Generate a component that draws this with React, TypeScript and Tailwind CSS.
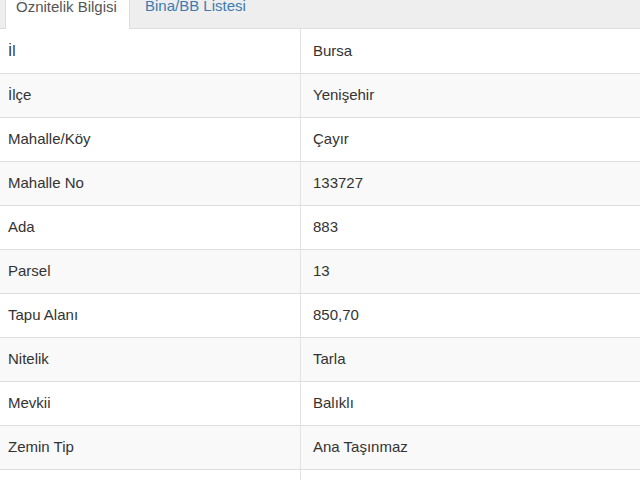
import React from 'react'

// ─── Data ────────────────────────────────────────────────────────────────────

const rows: [string, string][] = [
  ['İl', 'Bursa'],
  ['İlçe', 'Yenişehir'],
  ['Mahalle/Köy', 'Çayır'],
  ['Mahalle No', '133727'],
  ['Ada', '883'],
  ['Parsel', '13'],
  ['Tapu Alanı', '850,70'],
  ['Nitelik', 'Tarla'],
  ['Mevkii', 'Balıklı'],
  ['Zemin Tip', 'Ana Taşınmaz'],
  ['Pafta', 'H22-D-19-A-3'],
]

// ─── App ─────────────────────────────────────────────────────────────────────

export default function App() {
  return (
    <div
      className="w-[640px] h-[480px] overflow-hidden bg-white text-[#333]"
      style={{ fontFamily: '"Liberation Sans", Arial, sans-serif' }}
    >
      {/* Tabs */}
      <div className="flex h-[29px] bg-[#eeeeee] border-b border-[#dddddd] pl-[5px]">
        <div className="flex items-end w-[125px] h-[29px] -mb-px bg-white border-x border-[#dddddd] pl-[10px] pb-[12px]">
          <span className="text-[15px] leading-5 text-[#555]">Öznitelik Bilgisi</span>
        </div>
        <div className="flex items-end h-[28px] pl-[15px] pb-[12px] pr-[14px]">
          <span className="text-[15px] leading-5 text-[#3d7bb0]">Bina/BB Listesi</span>
        </div>
      </div>

      {/* Table */}
      <div className="flex flex-col">
        {rows.map(([k, v], i) => (
          <div
            key={k}
            className={
              'flex h-[44px] border-t border-[#dddddd] first:border-t-0 ' +
              (i % 2 === 1 ? 'bg-[#f9f9f9]' : 'bg-white')
            }
          >
            <div
              className={
                'w-[301px] flex items-center pl-[8px] text-[15px] border-r border-[#e3e3e3] ' +
                (i === rows.length - 1 ? 'text-[#d8d8d8] items-start pt-[8px]' : '')
              }
            >
              {k}
            </div>
            <div
              className={
                'flex-1 flex items-center pl-[12px] text-[15px] ' +
                (i === rows.length - 1 ? 'text-[#d8d8d8] items-start pt-[8px]' : '')
              }
            >
              {v}
            </div>
          </div>
        ))}
      </div>
    </div>
  )
}
